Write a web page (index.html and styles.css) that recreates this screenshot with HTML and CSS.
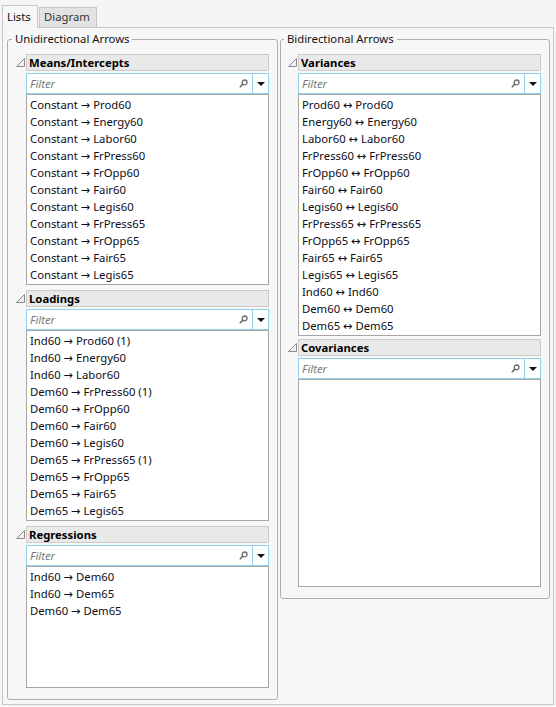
FILE: index.html
```html
<!DOCTYPE html>
<html>
<head>
<meta charset="utf-8">
<link rel="stylesheet" href="styles.css">
</head>
<body>
<div class="window">
  <div class="tabs">
    <div class="tab active">Lists</div>
    <div class="tab">Diagram</div>
  </div>
  <div class="panel">
    <fieldset class="group left">
      <legend>Unidirectional Arrows</legend>

      <div class="section">
        <div class="twisty"><svg width="9" height="9" viewBox="0 0 9 9"><polygon points="0.5,8.5 8.5,8.5 8.5,0.5" fill="#f0f0f0" stroke="#8a8a8a" stroke-width="1"/></svg></div>
        <div class="body">
          <div class="header">Means/Intercepts</div>
          <div class="filter">
            <span class="ph">Filter</span>
            <svg class="mag" width="9" height="9" viewBox="0 0 9 9"><circle cx="5.6" cy="3.4" r="2.4" fill="none" stroke="#6a6a6a" stroke-width="1.3"/><line x1="3.9" y1="5.1" x2="0.8" y2="8.2" stroke="#6a6a6a" stroke-width="1.6"/></svg>
            <span class="dd"><svg width="8" height="4" viewBox="0 0 8 4"><polygon points="0,0 8,0 4,4" fill="#111"/></svg></span>
          </div>
          <div class="list h191">
            <div class="item">Constant → Prod60</div>
            <div class="item">Constant → Energy60</div>
            <div class="item">Constant → Labor60</div>
            <div class="item">Constant → FrPress60</div>
            <div class="item">Constant → FrOpp60</div>
            <div class="item">Constant → Fair60</div>
            <div class="item">Constant → Legis60</div>
            <div class="item">Constant → FrPress65</div>
            <div class="item">Constant → FrOpp65</div>
            <div class="item">Constant → Fair65</div>
            <div class="item">Constant → Legis65</div>
          </div>
        </div>
      </div>

      <div class="section">
        <div class="twisty"><svg width="9" height="9" viewBox="0 0 9 9"><polygon points="0.5,8.5 8.5,8.5 8.5,0.5" fill="#f0f0f0" stroke="#8a8a8a" stroke-width="1"/></svg></div>
        <div class="body">
          <div class="header">Loadings</div>
          <div class="filter">
            <span class="ph">Filter</span>
            <svg class="mag" width="9" height="9" viewBox="0 0 9 9"><circle cx="5.6" cy="3.4" r="2.4" fill="none" stroke="#6a6a6a" stroke-width="1.3"/><line x1="3.9" y1="5.1" x2="0.8" y2="8.2" stroke="#6a6a6a" stroke-width="1.6"/></svg>
            <span class="dd"><svg width="8" height="4" viewBox="0 0 8 4"><polygon points="0,0 8,0 4,4" fill="#111"/></svg></span>
          </div>
          <div class="list h191">
            <div class="item">Ind60 → Prod60 (1)</div>
            <div class="item">Ind60 → Energy60</div>
            <div class="item">Ind60 → Labor60</div>
            <div class="item">Dem60 → FrPress60 (1)</div>
            <div class="item">Dem60 → FrOpp60</div>
            <div class="item">Dem60 → Fair60</div>
            <div class="item">Dem60 → Legis60</div>
            <div class="item">Dem65 → FrPress65 (1)</div>
            <div class="item">Dem65 → FrOpp65</div>
            <div class="item">Dem65 → Fair65</div>
            <div class="item">Dem65 → Legis65</div>
          </div>
        </div>
      </div>

      <div class="section">
        <div class="twisty"><svg width="9" height="9" viewBox="0 0 9 9"><polygon points="0.5,8.5 8.5,8.5 8.5,0.5" fill="#f0f0f0" stroke="#8a8a8a" stroke-width="1"/></svg></div>
        <div class="body">
          <div class="header">Regressions</div>
          <div class="filter">
            <span class="ph">Filter</span>
            <svg class="mag" width="9" height="9" viewBox="0 0 9 9"><circle cx="5.6" cy="3.4" r="2.4" fill="none" stroke="#6a6a6a" stroke-width="1.3"/><line x1="3.9" y1="5.1" x2="0.8" y2="8.2" stroke="#6a6a6a" stroke-width="1.6"/></svg>
            <span class="dd"><svg width="8" height="4" viewBox="0 0 8 4"><polygon points="0,0 8,0 4,4" fill="#111"/></svg></span>
          </div>
          <div class="list h122">
            <div class="item">Ind60 → Dem60</div>
            <div class="item">Ind60 → Dem65</div>
            <div class="item">Dem60 → Dem65</div>
          </div>
        </div>
      </div>
    </fieldset>

    <fieldset class="group right">
      <legend>Bidirectional Arrows</legend>

      <div class="section">
        <div class="twisty"><svg width="9" height="9" viewBox="0 0 9 9"><polygon points="0.5,8.5 8.5,8.5 8.5,0.5" fill="#f0f0f0" stroke="#8a8a8a" stroke-width="1"/></svg></div>
        <div class="body">
          <div class="header">Variances</div>
          <div class="filter">
            <span class="ph">Filter</span>
            <svg class="mag" width="9" height="9" viewBox="0 0 9 9"><circle cx="5.6" cy="3.4" r="2.4" fill="none" stroke="#6a6a6a" stroke-width="1.3"/><line x1="3.9" y1="5.1" x2="0.8" y2="8.2" stroke="#6a6a6a" stroke-width="1.6"/></svg>
            <span class="dd"><svg width="8" height="4" viewBox="0 0 8 4"><polygon points="0,0 8,0 4,4" fill="#111"/></svg></span>
          </div>
          <div class="list h242">
            <div class="item">Prod60 ↔ Prod60</div>
            <div class="item">Energy60 ↔ Energy60</div>
            <div class="item">Labor60 ↔ Labor60</div>
            <div class="item">FrPress60 ↔ FrPress60</div>
            <div class="item">FrOpp60 ↔ FrOpp60</div>
            <div class="item">Fair60 ↔ Fair60</div>
            <div class="item">Legis60 ↔ Legis60</div>
            <div class="item">FrPress65 ↔ FrPress65</div>
            <div class="item">FrOpp65 ↔ FrOpp65</div>
            <div class="item">Fair65 ↔ Fair65</div>
            <div class="item">Legis65 ↔ Legis65</div>
            <div class="item">Ind60 ↔ Ind60</div>
            <div class="item">Dem60 ↔ Dem60</div>
            <div class="item">Dem65 ↔ Dem65</div>
          </div>
        </div>
      </div>

      <div class="section">
        <div class="twisty"><svg width="9" height="9" viewBox="0 0 9 9"><polygon points="0.5,8.5 8.5,8.5 8.5,0.5" fill="#f0f0f0" stroke="#8a8a8a" stroke-width="1"/></svg></div>
        <div class="body">
          <div class="header">Covariances</div>
          <div class="filter">
            <span class="ph">Filter</span>
            <svg class="mag" width="9" height="9" viewBox="0 0 9 9"><circle cx="5.6" cy="3.4" r="2.4" fill="none" stroke="#6a6a6a" stroke-width="1.3"/><line x1="3.9" y1="5.1" x2="0.8" y2="8.2" stroke="#6a6a6a" stroke-width="1.6"/></svg>
            <span class="dd"><svg width="8" height="4" viewBox="0 0 8 4"><polygon points="0,0 8,0 4,4" fill="#111"/></svg></span>
          </div>
          <div class="list h206"></div>
        </div>
      </div>
    </fieldset>
  </div>
</div>
</body>
</html>
```
FILE: styles.css
```css
html, body {
  margin: 0;
  padding: 0;
}
body {
  background: #f5f5f5;
  font-family: "Noto Sans", "Open Sans", "DejaVu Sans", sans-serif;
  font-size: 11.3px;
  color: #111;
}
.window {
  width: 556px;
  height: 707px;
  box-sizing: border-box;
  padding: 5px 2px 2px 2px;
  display: flex;
  flex-direction: column;
}
.tabs {
  display: flex;
  align-items: flex-end;
  height: 22px;
  flex: none;
}
.tab {
  box-sizing: border-box;
  height: 20px;
  line-height: 18px;
  padding: 0 4px;
  border: 1px solid #c6c6c6;
  border-bottom: none;
  background: #e3e3e3;
  color: #333;
  margin-left: 1px;
  width: 58px;
}
.tab.active {
  height: 23px;
  line-height: 22px;
  width: 36px;
  margin-left: 0;
  background: #f7f7f7;
  color: #111;
  margin-bottom: -1px;
  position: relative;
  z-index: 1;
}
.panel {
  flex: 1;
  box-sizing: border-box;
  border: 1px solid #c6c6c6;
  background: #f7f7f7;
  padding: 3px 3px 4px 4px;
  display: grid;
  grid-template-columns: 271px 270px;
  column-gap: 2px;
  align-items: start;
}
.group {
  margin: 0;
  min-width: 0;
  border: 1px solid #aeaeae;
  border-radius: 3px;
  padding: 7px 8px 11px 4px;
}
.group.left {
  align-self: stretch;
}
.group.right {
  padding-left: 3px;
}
.group legend {
  padding: 0 3px;
  margin-left: 0;
  line-height: 16px;
  color: #111;
}
.section {
  display: flex;
}
.section + .section {
  margin-top: 5px;
}
.right .section + .section {
  margin-top: 3px;
}
.twisty {
  width: 14px;
  flex: none;
}
.twisty svg {
  display: block;
  margin: 4px 0 0 4px;
}
.body {
  flex: 1;
  min-width: 0;
}
.header {
  box-sizing: border-box;
  height: 17px;
  line-height: 15px;
  border: 1px solid #cbcbcb;
  background: #e9e9e9;
  font-weight: bold;
  padding-left: 2px;
  color: #000;
}
.filter {
  box-sizing: border-box;
  margin-top: 2px;
  height: 21px;
  border: 1px solid #92d1ee;
  background: #fff;
  display: flex;
  align-items: center;
}
.ph {
  flex: 1;
  font-style: italic;
  color: #7a7a7a;
  padding-left: 3px;
}
.mag {
  display: block;
  margin-right: 4px;
  flex: none;
}
.dd {
  flex: none;
  width: 15px;
  height: 100%;
  border-left: 1px solid #92d1ee;
  display: flex;
  align-items: center;
  justify-content: center;
}
.dd svg {
  display: block;
}
.list {
  box-sizing: border-box;
  border: 1px solid #a6a6a6;
  background: #fff;
  padding: 1px 0;
}
.h191 { height: 191px; }
.h122 { height: 122px; }
.h242 { height: 242px; }
.h206 { height: 208px; }
.item {
  height: 17px;
  line-height: 17px;
  padding-left: 3px;
  white-space: nowrap;
  color: #0d0d1a;
}
```
